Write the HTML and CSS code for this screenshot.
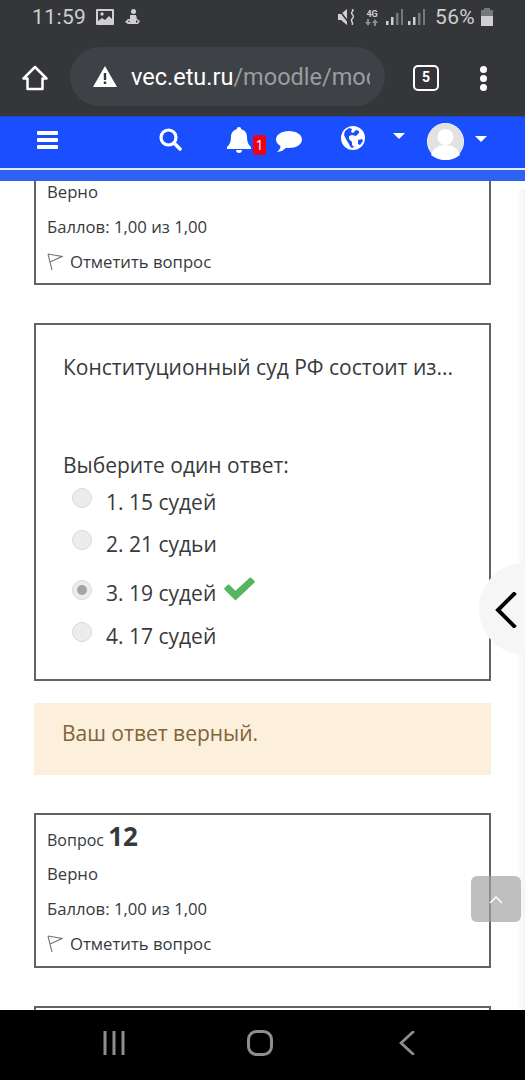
FILE: index.html
```html
<!DOCTYPE html>
<html lang="ru">
<head>
    <meta charset="UTF-8">
    <meta name="viewport" content="width=device-width, initial-scale=1.0">
    <title>Moodle</title>
    <link rel="stylesheet" href="styles.css">
</head>
<body>
    <div class="phone">
        <div class="status-bar">
            <div class="status-left">
                <span class="clock">11:59</span>
                <svg class="st-icon" width="18" height="16" viewBox="0 0 18 16"><path fill="#d0d0d0" d="M1 0h16a1 1 0 0 1 1 1v14a1 1 0 0 1-1 1H1a1 1 0 0 1-1-1V1a1 1 0 0 1 1-1z"/><path fill="#35363a" d="M2 2h14v8l-3-3-4 4-3-2-4 3z"/><circle cx="6" cy="5" r="1.7" fill="#d0d0d0"/></svg>
                <svg class="st-icon" width="16" height="16" viewBox="0 0 16 16"><circle cx="8.5" cy="2.5" r="2.5" fill="#d0d0d0"/><path fill="#d0d0d0" d="M5 6h6l1 4 3 2-2 3H3l-3-2 3-3h2zM4 11l-1 1.500 2 1zM11 11v3l2-1.500z"/></svg>
            </div>
            <div class="status-right">
                <svg width="18" height="16" viewBox="0 0 18 16"><path fill="#d0d0d0" d="M0 5h3l6-5v16l-6-5H0z"/><path stroke="#35363a" stroke-width="1.500" d="M1 1l10 13"/><path fill="none" stroke="#d0d0d0" stroke-width="1.500" d="M14 0c3 2-2 3 0 5s2 3 0 5 2 3 0 6"/></svg>
                <div class="net"><span>4G</span><svg width="14" height="7" viewBox="0 0 14 7"><path fill="#8b8c8e" d="M3 7L0 3h2V0h2v3h2zM10 0l3 4h-2v3H9V4H7z"/></svg></div>
                <svg width="17" height="16" viewBox="0 0 17 16"><rect y="12" width="2.500" height="4" fill="#d0d0d0"/><rect x="5" y="8" width="2.500" height="8" fill="#d0d0d0"/><rect x="10" y="4" width="2.500" height="12" fill="#77787a"/><rect x="15" width="2" height="16" fill="#77787a"/></svg>
                <svg width="17" height="16" viewBox="0 0 17 16"><rect y="12" width="2.500" height="4" fill="#d0d0d0"/><rect x="5" y="8" width="2.500" height="8" fill="#d0d0d0"/><rect x="10" y="4" width="2.500" height="12" fill="#77787a"/><rect x="15" width="2" height="16" fill="#77787a"/></svg>
                <span class="battery-text">56%</span>
                <svg width="12" height="18" viewBox="0 0 12 18"><path fill="#77787a" d="M3 0h6v2h3v7H0V2h3z"/><rect y="8" width="12" height="10" fill="#d0d0d0"/></svg>
            </div>
        </div>

        <div class="browser-bar">
            <svg class="home-icon" width="28" height="28" viewBox="0 0 28 28"><path fill="none" stroke="#fff" stroke-width="2.500" stroke-linejoin="round" d="M14 3L2.500 14.500H6.500V25h15V14.500h4z"/></svg>
            <div class="omnibox">
                <svg class="warn-icon" width="24" height="21" viewBox="0 0 24 21"><path fill="#fff" d="M12 0l12 21H0z"/><rect x="10.800" y="7" width="2.400" height="7" fill="#35363a"/><rect x="10.800" y="15.500" width="2.400" height="2.500" fill="#35363a"/></svg>
                <div class="url"><span class="url-host">vec.etu.ru</span>/moodle/mod</div>
            </div>
            <div class="tabs-count">5</div>
            <div class="menu-dots"><i></i><i></i><i></i></div>
        </div>

        <nav class="navbar">
            <svg class="nav-burger" width="21" height="18" viewBox="0 0 21 18"><path fill="#fff" d="M1 0h19a1 1 0 0 1 1 1v2a1 1 0 0 1-1 1H1a1 1 0 0 1-1-1V1a1 1 0 0 1 1-1zM1 7h19a1 1 0 0 1 1 1v2a1 1 0 0 1-1 1H1a1 1 0 0 1-1-1V8a1 1 0 0 1 1-1zM1 14h19a1 1 0 0 1 1 1v2a1 1 0 0 1-1 1H1a1 1 0 0 1-1-1v-2a1 1 0 0 1 1-1z"/></svg>
            <svg class="nav-search" width="23" height="23" viewBox="0 0 23 23"><circle cx="9.500" cy="9.500" r="7.500" fill="none" stroke="#fff" stroke-width="3.200"/><path stroke="#fff" stroke-width="3.600" stroke-linecap="round" d="M15 15l6 6"/></svg>
            <svg class="nav-bell" width="24" height="26" viewBox="0 0 24 26"><path fill="#fff" d="M12 0c1.300 0 2.200.9 2.200 2.200C18 3 20 6 20 10c0 6 2 8 4 10v2H0v-2c2-2 4-4 4-10 0-4 2-7 5.800-7.800C9.800.9 10.700 0 12 0zM9 23h6c0 2-1.300 3-3 3s-3-1-3-3z"/></svg>
            <span class="nav-badge">1</span>
            <svg class="nav-chat" width="26" height="23" viewBox="0 0 26 23"><path fill="#fff" d="M13 1c7 0 13 3.500 13 8.500S20 18 13 18c-1 0-2-.1-3-.2C8 20 5 22 1 22c2-2 3.500-3.500 3.500-6C2 14.500 0 12.200 0 9.500 0 4.500 6 1 13 1z"/></svg>
            <svg class="nav-globe" width="24" height="24" viewBox="0 0 24 24"><circle cx="12" cy="12" r="12" fill="#fff"/><path fill="#1a4fff" d="M4 5l4-3 3 1-1 3 2 1 3-3 3 1v2l-3 3-4-1-3 1v3l3 3v3l2 2-2 1c-3-2-3-5-5-7L3 9zM17 14l4-1 1 2-3 4-2-1z"/></svg>
            <span class="caret nav-caret-lang"></span>
            <svg class="nav-avatar" width="37" height="37" viewBox="0 0 37 37"><circle cx="18.500" cy="18.500" r="18.500" fill="#fff"/><circle cx="18.500" cy="18.500" r="18" fill="#e2e2e2"/><circle cx="18.500" cy="14" r="8" fill="#fff"/><path fill="#fff" d="M4 32c2-7 8-10 14.500-10S31 25 33 32c-3.500 3-9 5-14.500 5S7.500 35 4 32z"/></svg>
            <span class="caret nav-caret-user"></span>
        </nav>
        <div class="nav-strip"></div>

        <main class="content">
            <section class="que que-cut">
                <p class="que-line">Верно</p>
                <p class="que-line">Баллов: 1,00 из 1,00</p>
                <p class="que-line que-flag">
                    <svg width="16" height="18" viewBox="0 0 16 18"><path fill="none" stroke="#777" stroke-width="1.100" d="M1 1l4 16M1 1l14 2.500L3 9"/></svg>
                    Отметить вопрос
                </p>
            </section>

            <section class="que que-body">
                <p class="que-text">Конституционный суд РФ состоит из...</p>
                <p class="que-prompt">Выберите один ответ:</p>
                <div class="answer">
                    <span class="radio"></span><span>1. 15 судей</span>
                </div>
                <div class="answer">
                    <span class="radio"></span><span>2. 21 судьи</span>
                </div>
                <div class="answer answer-ok">
                    <span class="radio radio-on"></span><span>3. 19 судей</span>
                    <svg class="check" width="31" height="24" viewBox="0 0 31 24"><path fill="#55b560" d="M11.500 23.500L.7 12.800a1.500 1.500 0 0 1 0-2.100l2.800-2.800a1.500 1.500 0 0 1 2.100 0l5.900 5.900L25.400.9a1.500 1.500 0 0 1 2.100 0l2.800 2.800a1.500 1.500 0 0 1 0 2.100z"/></svg>
                </div>
                <div class="answer">
                    <span class="radio"></span><span>4. 17 судей</span>
                </div>
            </section>

            <div class="feedback">Ваш ответ верный.</div>

            <section class="que que-full">
                <h3 class="que-title">Вопрос <b>12</b></h3>
                <p class="que-line">Верно</p>
                <p class="que-line">Баллов: 1,00 из 1,00</p>
                <p class="que-line que-flag">
                    <svg width="16" height="18" viewBox="0 0 16 18"><path fill="none" stroke="#777" stroke-width="1.100" d="M1 1l4 16M1 1l14 2.500L3 9"/></svg>
                    Отметить вопрос
                </p>
            </section>

            <section class="que que-next"></section>

            <div class="edge-shade"></div>
            <div class="side-handle">
                <svg width="24" height="36" viewBox="0 0 24 36"><path fill="none" stroke="#000" stroke-width="4" stroke-linecap="square" d="M20 2L4 18l16 16"/></svg>
            </div>
            <div class="to-top">
                <svg width="14" height="9" viewBox="0 0 14 9"><path fill="none" stroke="#fff" stroke-width="1.500" d="M1 8l6-6 6 6"/></svg>
            </div>
        </main>

        <div class="android-nav">
            <svg width="22" height="24" viewBox="0 0 22 24"><path stroke="#8e8e8e" stroke-width="3" d="M2 0v24M11 0v24M20 0v24"/></svg>
            <svg class="nav-home" width="26" height="26" viewBox="0 0 26 26"><rect x="1.500" y="1.500" width="23" height="23" rx="8" fill="none" stroke="#8e8e8e" stroke-width="3"/></svg>
            <svg class="nav-back" width="16" height="24" viewBox="0 0 16 24"><path fill="none" stroke="#8e8e8e" stroke-width="2.800" stroke-linecap="round" d="M14 1L2 12l12 11"/></svg>
        </div>
    </div>
</body>
</html>
```

FILE: styles.css
```css
* {
    box-sizing: border-box;
}
body {
    margin: 0;
    font-family: "Open Sans", sans-serif;
    color: #373a3c;
    background: #fff;
}
p, h3 {
    margin: 0;
    font-weight: 400;
}
.phone {
    width: 525px;
    height: 1080px;
    display: flex;
    flex-direction: column;
    overflow: hidden;
}

/* android status bar + chrome toolbar */
.status-bar {
    height: 40px;
    background: #35363a;
    padding: 0 46px 6px 32px;
    display: flex;
    justify-content: space-between;
    align-items: center;
    flex: none;
}
.status-left, .status-right {
    display: flex;
    align-items: center;
}
.clock {
    font-family: Roboto, sans-serif;
    font-size: 21px;
    color: #cfcfcf;
    letter-spacing: 0.4px;
    margin-right: 10px;
}
.st-icon {
    margin-right: 11px;
}
.status-right {
    gap: 5px;
    margin-right: -14px;
}
.net {
    display: flex;
    flex-direction: column;
    align-items: center;
    width: 16px;
    margin: 0 1px 0 3px;
    font: 700 9px/10px Roboto, sans-serif;
    color: #d0d0d0;
}
.battery-text {
    font-family: Roboto, sans-serif;
    font-size: 21px;
    letter-spacing: 0.3px;
    color: #cfcfcf;
    margin: 0 1px 0 5px;
}
.browser-bar {
    height: 76px;
    background: #35363a;
    display: flex;
    align-items: center;
    padding: 0 0 0 21px;
    flex: none;
}
.omnibox {
    width: 315px;
    height: 59px;
    margin-left: 21px;
    margin-top: -3px;
    border-radius: 30px;
    background: #3e4145;
    display: flex;
    align-items: center;
    padding: 0 15px 0 23px;
    gap: 14px;
}
.warn-icon {
    flex: none;
}
.url {
    font-family: Roboto, sans-serif;
    font-size: 23.5px;
    color: #9a9da0;
    white-space: nowrap;
    overflow: hidden;
}
.url-host {
    color: #fff;
}
.tabs-count {
    width: 26px;
    height: 26px;
    margin-left: 28px;
    border: 2.5px solid #fff;
    border-radius: 5px;
    color: #fff;
    font: 700 14px/21px Roboto, sans-serif;
    text-align: center;
}
.menu-dots {
    display: flex;
    flex-direction: column;
    gap: 2px;
    margin-left: 41px;
}
.menu-dots i {
    width: 7px;
    height: 7px;
    border-radius: 50%;
    background: #fff;
}

/* moodle navbar */
.navbar {
    height: 54px;
    flex: none;
    background: #1a4fff;
    border-top: 1px solid #1c45c8;
    border-bottom: 2px solid #e4ebff;
    display: flex;
    align-items: flex-start;
}
.nav-burger {
    margin: 14px 0 0 37px;
}
.nav-search {
    margin: 11px 0 0 101px;
}
.nav-bell {
    margin: 10px 0 0 45px;
}
.nav-badge {
    width: 13px;
    height: 20px;
    margin: 18px 0 0 2px;
    background: #f00016;
    border-radius: 2px;
    color: #fff;
    font: 400 14px/20px "Open Sans", sans-serif;
    text-align: center;
}
.nav-chat {
    margin: 13px 0 0 10px;
}
.nav-globe {
    margin: 9px 0 0 39px;
}
.caret {
    width: 0;
    height: 0;
    border-left: 6px solid transparent;
    border-right: 6px solid transparent;
    border-top: 6px solid #fff;
}
.nav-caret-lang {
    margin: 16px 0 0 28px;
}
.nav-avatar {
    margin: 6px 0 0 22px;
}
.nav-caret-user {
    margin: 19px 0 0 11px;
}
.nav-strip {
    height: 11px;
    background: #2d62f5;
    flex: none;
}

.content {
    position: relative;
    flex: 1;
    min-height: 0;
    overflow: hidden;
    padding: 0 34px;
}
.que {
    width: 457px;
    border: 2px solid #5f6468;
    padding: 0 11px;
    margin-bottom: 38px;
}
.que-cut {
    display: flow-root;
    border-top: none;
    height: 104px;
}
.que-cut .que-line:first-child {
    margin-top: -1px;
}
.que-line {
    font-size: 16.7px;
    line-height: 24px;
    margin-bottom: 11px;
}
.que-flag {
    display: flex;
    align-items: center;
    gap: 7px;
    margin-bottom: 0;
}
.que-body {
    height: 358px;
    padding: 26px 28px 0 27px;
    margin-bottom: 22px;
}
.que-text {
    font-size: 21px;
    line-height: 32px;
    margin-bottom: 67px;
}
.que-prompt {
    font-size: 21px;
    line-height: 30px;
    margin-bottom: 1px;
}
.answer {
    display: flex;
    align-items: center;
    height: 42px;
    font-size: 21px;
    padding-left: 9px;
    gap: 14px;
}
.answer-ok {
    margin-top: 7px;
    margin-bottom: 1px;
}
.radio {
    width: 20px;
    height: 20px;
    border-radius: 50%;
    background: #ececec;
    border: 1px solid #d9d9d9;
    margin-top: -8px;
    display: flex;
    align-items: center;
    justify-content: center;
}
.answer-ok .radio {
    margin-top: -6px;
}
.radio-on::after {
    content: "";
    width: 10px;
    height: 10px;
    border-radius: 50%;
    background: #a5a5a5;
}
.check {
    margin: -8px 0 0 -6px;
}
.feedback {
    height: 72px;
    width: 457px;
    background: #fcefdc;
    color: #806538;
    font-size: 21px;
    line-height: 30px;
    padding: 15px 28px;
    margin-bottom: 38px;
}
.que-full {
    padding-bottom: 10px;
}
.que-title {
    font-size: 16px;
    line-height: 30px;
    padding-top: 6px;
    margin-bottom: 7px;
}
.que-title b {
    font-size: 26px;
    font-weight: 700;
}
.que-next {
    height: 40px;
    margin-bottom: 0;
}

/* floating stuff on top of the page */
.edge-shade {
    position: absolute;
    right: 0;
    top: 8px;
    bottom: 0;
    width: 9px;
    background: linear-gradient(to right, #fff, #f4f4f4);
}
.side-handle {
    position: absolute;
    left: 479px;
    top: 382px;
    width: 92px;
    height: 92px;
    border-radius: 50%;
    background: #f6f6f6;
    padding: 29px 0 0 15px;
}
.to-top {
    position: absolute;
    left: 471px;
    top: 695px;
    width: 50px;
    height: 46px;
    border-radius: 6px;
    background: rgba(160, 160, 160, 0.68);
    display: flex;
    align-items: center;
    justify-content: center;
}
.android-nav {
    height: 70px;
    flex: none;
    background: #000;
    display: flex;
    align-items: center;
    padding: 0 0 4px 103px;
}
.nav-home {
    margin-left: 122px;
}
.nav-back {
    margin-left: 126px;
}
```
